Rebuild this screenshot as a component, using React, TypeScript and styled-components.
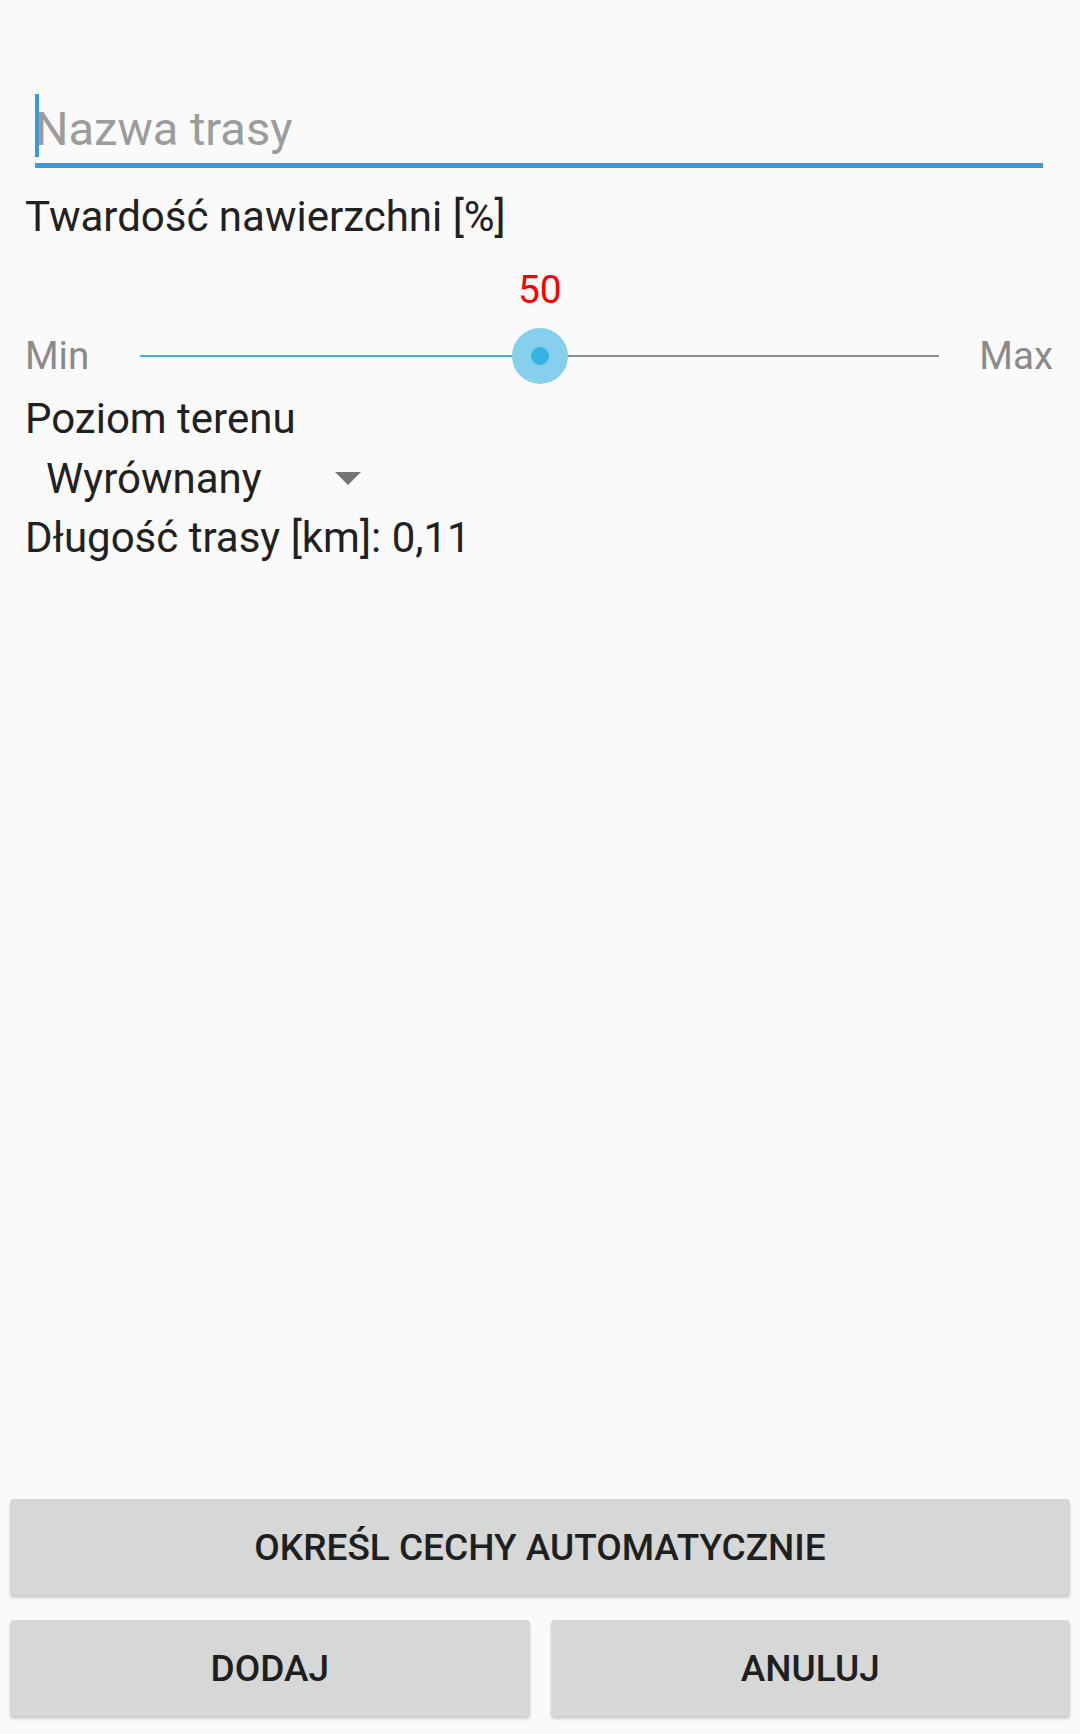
import React from "react";
import styled, { createGlobalStyle } from "styled-components";

const GlobalStyle = createGlobalStyle`
  html, body, #root {
    margin: 0;
    padding: 0;
    height: 100%;
  }
  body {
    background: #fafafa;
    font-family: Roboto, "Liberation Sans", sans-serif;
  }
`;

const sliderValue = 50;

const App = () => {
  return (
    <Screen>
      <GlobalStyle />
      <Form>
        <Field>
          <Caret />
          <Placeholder>Nazwa trasy</Placeholder>
        </Field>
        <Label $top={24}>Twardość nawierzchni [%]</Label>
        <SliderGrid>
          <ValueCell>
            <ValueText style={{ left: `${sliderValue}%` }}>{sliderValue}</ValueText>
          </ValueCell>
          <EndLabel>Min</EndLabel>
          <Track>
            <TrackFill style={{ width: `${sliderValue}%` }} />
            <Thumb style={{ left: `${sliderValue}%` }}>
              <ThumbDot />
            </Thumb>
          </Track>
          <EndLabel>Max</EndLabel>
        </SliderGrid>
        <Label $top={17}>Poziom terenu</Label>
        <Spinner>
          <SpinnerText>Wyrównany</SpinnerText>
          <svg width="26" height="13" viewBox="0 0 26 13">
            <polygon points="0,0 26,0 13,13" fill="#757575" />
          </svg>
        </Spinner>
        <Label>Długość trasy [km]: 0,11</Label>
      </Form>
      <Footer>
        <Button>Określ cechy automatycznie</Button>
        <ButtonRow>
          <Button>Dodaj</Button>
          <Button>Anuluj</Button>
        </ButtonRow>
      </Footer>
    </Screen>
  );
};

export default App;

const Screen = styled.div`
  min-height: 100vh;
  display: flex;
  flex-direction: column;
  background: #fafafa;
  box-sizing: border-box;
`;

const Form = styled.div`
  display: flex;
  flex-direction: column;
  padding: 94px 0 0 25px;
`;

const Field = styled.div`
  position: relative;
  margin: 0 37px 0 10px;
  padding: 7px 0 7px 0;
  height: 55px;
  border-bottom: 5px solid #3a9ad9;
  box-shadow: 0 1px 0 -4px #c4e1f4;
`;

const Caret = styled.div`
  position: absolute;
  left: 0;
  top: 0;
  width: 4px;
  height: 63px;
  background: #3a9ad9;
`;

const Placeholder = styled.div`
  font-size: 47px;
  line-height: 55px;
  color: #9c9c9c;
`;

const Label = styled.div<{ $top?: number }>`
  margin-top: ${(p) => p.$top ?? 0}px;
  font-size: 42px;
  line-height: 49px;
  color: #212121;
`;

const SliderGrid = styled.div`
  display: grid;
  grid-template-columns: auto 1fr auto;
  grid-template-rows: 43px 43px;
  row-gap: 22px;
  align-items: center;
  margin-top: 28px;
  padding-right: 27px;
`;

const ValueCell = styled.div`
  grid-column: 2;
  grid-row: 1;
  position: relative;
  height: 43px;
  margin: 0 40px 0 51px;
`;

const ValueText = styled.span`
  position: absolute;
  top: 0;
  transform: translateX(-50%);
  font-size: 39px;
  line-height: 43px;
  color: #ff0000;
`;

const EndLabel = styled.div`
  grid-row: 2;
  font-size: 38.5px;
  line-height: 43px;
  color: #8a8a8a;
`;

const Track = styled.div`
  grid-row: 2;
  position: relative;
  height: 2px;
  margin: 0 40px 0 51px;
  background: #8c8c8c;
`;

const TrackFill = styled.div`
  height: 100%;
  background: #33b5e5;
`;

const Thumb = styled.div`
  position: absolute;
  top: 50%;
  width: 56px;
  height: 56px;
  border-radius: 50%;
  background: #86d0ee;
  transform: translate(-50%, -50%);
  display: flex;
  align-items: center;
  justify-content: center;
`;

const ThumbDot = styled.div`
  width: 18px;
  height: 18px;
  border-radius: 50%;
  background: #35b4e4;
`;

const Spinner = styled.div`
  display: flex;
  align-items: center;
  gap: 73px;
  padding: 11px 0 10px 21px;
`;

const SpinnerText = styled.div`
  font-size: 42px;
  line-height: 49px;
  color: #212121;
`;

const Footer = styled.div`
  margin-top: auto;
  display: flex;
  flex-direction: column;
  gap: 25px;
  padding: 0 10px 18px 10px;
`;

const ButtonRow = styled.div`
  display: grid;
  grid-template-columns: 1fr 1fr;
  column-gap: 21px;
`;

const Button = styled.button`
  height: 96px;
  border: none;
  border-radius: 4px;
  background: #d6d7d7;
  box-shadow: 0 3px 3px rgba(0, 0, 0, 0.18);
  font-family: Roboto, "Liberation Sans", sans-serif;
  font-size: 37px;
  font-weight: 500;
  text-transform: uppercase;
  color: #1f1f1f;
  cursor: pointer;
`;
